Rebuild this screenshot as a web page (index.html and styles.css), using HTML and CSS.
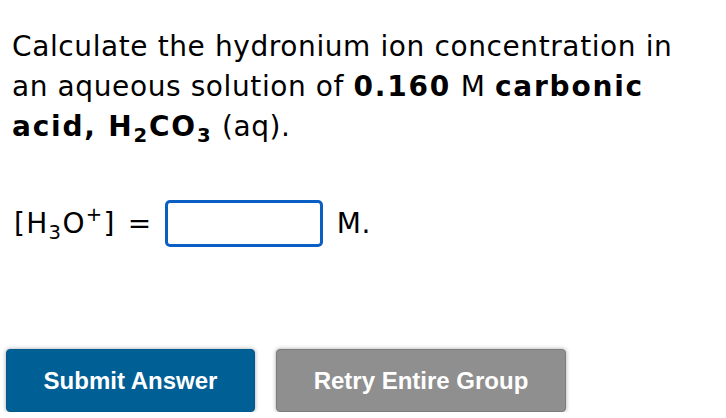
FILE: index.html
```html
<!DOCTYPE html>
<html>
<head>
<meta charset="utf-8">
<link rel="stylesheet" href="styles.css">
</head>
<body>
<div class="page">
  <p class="question">Calculate the hydronium ion concentration in an aqueous solution of <b>0.160</b> M <b>carbonic acid, H<sub>2</sub>CO<sub>3</sub></b> (aq).</p>
  <div class="answer-row">
    <span class="label">[H<sub>3</sub>O<sup>+</sup>]</span>
    <span class="eq">=</span>
    <input class="answer" type="text">
    <span class="unit">M.</span>
  </div>
  <div class="buttons">
    <button class="btn submit">Submit Answer</button>
    <button class="btn retry">Retry Entire Group</button>
  </div>
</div>
</body>
</html>
```
FILE: styles.css
```css
html, body {
  margin: 0;
  padding: 0;
  background: #fff;
}
.page {
  font-family: "DejaVu Sans", Verdana, sans-serif;
  color: #000;
  padding: 27px 0 0 12px;
}
.question {
  margin: 0;
  font-size: 28px;
  line-height: 40px;
  letter-spacing: 0.6px;
  width: 700px;
}
.question b {
  font-weight: bold;
  letter-spacing: 1.8px;
}
sub, sup {
  font-size: 70%;
  line-height: 0;
  position: relative;
  vertical-align: baseline;
}
sub { top: 0.3em; }
sup { top: -0.6em; }
.answer-row {
  display: flex;
  align-items: center;
  margin-top: 53px;
  font-size: 28px;
  letter-spacing: 0.6px;
  padding-left: 2px;
}
.label { letter-spacing: 1.3px; }
.eq { margin-left: 12px; }
.answer {
  margin-left: 13px;
  width: 158px;
  height: 47px;
  box-sizing: border-box;
  border: 3px solid #0a5fc4;
  border-radius: 5px;
  padding: 0;
  outline: none;
}
.unit { margin-left: 14px; }
.buttons {
  display: flex;
  gap: 21px;
  margin-top: 102px;
  margin-left: -6px;
}
.btn {
  font-family: "Liberation Sans", Arial, sans-serif;
  font-weight: bold;
  font-size: 24px;
  color: #fff;
  height: 63px;
  border-radius: 4px;
  box-shadow: 0 0 4px rgba(0,0,0,0.35);
  cursor: pointer;
  padding: 0;
}
.submit {
  width: 249px;
  background: #005f95;
  border: 1px solid #005a8e;
}
.retry {
  width: 290px;
  background: #8f8f8f;
  border: 1px solid #7c7c7c;
}
```
